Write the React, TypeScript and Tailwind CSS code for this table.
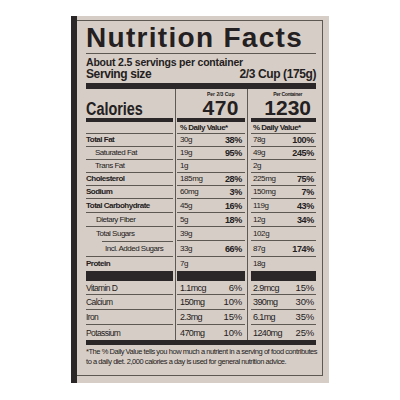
import React from "react";

type Nutrient = {
  name: string;
  nameCls: string;
  h: string;
  a: string;
  ap?: string;
  b: string;
  bp?: string;
  noLine?: boolean;
  subLine?: boolean;
};

const rows: Nutrient[] = [
  { name: "Total Fat", nameCls: "font-bold", h: "h-[13px]", a: "30g", ap: "38%", b: "78g", bp: "100%" },
  { name: "Saturated Fat", nameCls: "pl-[9px]", h: "h-[13px]", a: "19g", ap: "95%", b: "49g", bp: "245%" },
  { name: "Trans Fat", nameCls: "pl-[9px]", h: "h-[13px]", a: "1g", b: "2g" },
  { name: "Cholesterol", nameCls: "font-bold", h: "h-[13px]", a: "185mg", ap: "28%", b: "225mg", bp: "75%" },
  { name: "Sodium", nameCls: "font-bold", h: "h-[13px]", a: "60mg", ap: "3%", b: "150mg", bp: "7%" },
  { name: "Total Carbohydrate", nameCls: "font-bold", h: "h-[14px]", a: "45g", ap: "16%", b: "119g", bp: "43%" },
  { name: "Dietary Fiber", nameCls: "pl-[10px]", h: "h-[14px]", a: "5g", ap: "18%", b: "12g", bp: "34%" },
  { name: "Total Sugars", nameCls: "pl-[10px]", h: "h-[14px]", a: "39g", b: "102g", noLine: true },
  { name: "Incl. Added Sugars", nameCls: "pl-[19px]", h: "h-[16px]", a: "33g", ap: "66%", b: "87g", bp: "174%", subLine: true },
];

const vitamins = [
  { name: "Vitamin D", h: "h-[14px]", a: "1.1mcg", ap: "6%", b: "2.9mcg", bp: "15%" },
  { name: "Calcium", h: "h-[15px]", a: "150mg", ap: "10%", b: "390mg", bp: "30%" },
  { name: "Iron", h: "h-[15px]", a: "2.3mg", ap: "15%", b: "6.1mg", bp: "35%" },
  { name: "Potassium", h: "h-[15px]", a: "470mg", ap: "10%", b: "1240mg", bp: "25%", last: true },
];

const line = "border-[#5e5853]";

function NutrientRow({ r }: { r: Nutrient }) {
  return (
    <div className={`flex ${r.h}`}>
      <div className="w-[87px] flex flex-col">
        {r.subLine && <div className={`ml-[16px] border-t ${line}`} />}
        <div
          className={`flex-1 flex items-center text-[8px] leading-[10px] tracking-[-0.5px] ${r.nameCls} ${
            r.noLine ? "" : `border-b ${line}`
          }`}
        >
          {r.name}
        </div>
      </div>
      <div className={`ml-[2px] w-[70px] border-l ${line} pl-[1px]`}>
        <div className={`h-full flex items-center justify-between border-b ${line} pl-[3px] pr-[3px]`}>
          <span className="text-[8px] leading-[10px] tracking-[-0.4px]">{r.a}</span>
          <span className="text-[9px] leading-[10px] font-bold tracking-[-0.3px]">{r.ap}</span>
        </div>
      </div>
      <div className={`ml-[2px] flex-1 border-l ${line} pl-[3px]`}>
        <div className={`h-full flex items-center justify-between border-b ${line} pl-[2px] pr-[2px]`}>
          <span className="text-[8px] leading-[10px] tracking-[-0.4px]">{r.b}</span>
          <span className="text-[9px] leading-[10px] font-bold tracking-[-0.3px]">{r.bp}</span>
        </div>
      </div>
    </div>
  );
}

export default function App() {
  return (
    <div className="w-[400px] h-[400px] bg-white pt-[16px] font-['Liberation_Sans',Arial,sans-serif] text-[#242021]">
      <div className="ml-[71px] w-[258px] h-[367px] bg-[#d6cec6] flex">
        <div className="w-[6px] h-full bg-[#2b2728]" />
        <div className={`mt-[4px] w-[246px] h-[356px] border-t border-r border-b ${line} pl-[9px] pr-[6px]`}>
          <div className="mt-[3px] text-[28px] leading-[28px] font-bold tracking-[1.3px]">Nutrition Facts</div>
          <div className="mt-[1px] h-[1px] bg-[#5e5853]" />
          <div className="mt-[2px] text-[10.5px] leading-[12px] font-bold tracking-[-0.2px]">
            About 2.5 servings per container
          </div>
          <div className="flex justify-between text-[12px] leading-[13px] font-bold tracking-[-0.4px]">
            <span>Serving size</span>
            <span>2/3 Cup (175g)</span>
          </div>
          <div className="mt-[2px] h-[6px] bg-[#2b2728]" />

          {/* calories header */}
          <div className="flex h-[33px]">
            <div className="w-[87px] flex items-end border-b-4 border-[#2b2728]">
              <span className="inline-block origin-left scale-x-[0.8] text-[18px] leading-[18px] font-bold">
                Calories
              </span>
            </div>
            <div className={`ml-[2px] w-[70px] border-l ${line} pl-[1px]`}>
              <div className="h-full flex justify-end pr-[6px] border-b-4 border-[#2b2728]">
                <div className="flex flex-col items-center justify-end">
                  <span className="text-[5px] leading-[6px] font-bold">Per 2/3 Cup</span>
                  <span className="text-[21px] leading-[21px] font-bold tracking-[0.5px]">470</span>
                </div>
              </div>
            </div>
            <div className={`ml-[2px] flex-1 border-l ${line} pl-[3px]`}>
              <div className="h-full flex justify-end pr-[5px] border-b-4 border-[#2b2728]">
                <div className="flex flex-col items-center justify-end">
                  <span className="text-[5px] leading-[6px] font-bold tracking-[-0.3px]">Per Container</span>
                  <span className="text-[21px] leading-[21px] font-bold">1230</span>
                </div>
              </div>
            </div>
          </div>

          {/* daily value header */}
          <div className="flex h-[12px]">
            <div className={`w-[87px] border-b ${line}`} />
            <div className={`ml-[2px] w-[70px] border-l ${line} pl-[1px]`}>
              <div className={`h-full flex items-center border-b ${line} pl-[3px] text-[8px] leading-[10px] font-bold tracking-[-0.5px]`}>
                % Daily Value*
              </div>
            </div>
            <div className={`ml-[2px] flex-1 border-l ${line} pl-[3px]`}>
              <div className={`h-full flex items-center border-b ${line} pl-[2px] text-[8px] leading-[10px] font-bold tracking-[-0.5px]`}>
                % Daily Value*
              </div>
            </div>
          </div>

          {rows.map((r) => (
            <NutrientRow key={r.name} r={r} />
          ))}

          {/* protein + thick bar */}
          <div className="flex h-[24px]">
            <div className="w-[87px] flex items-center border-b-[10px] border-[#2b2728] text-[8px] leading-[10px] font-bold tracking-[-0.5px]">
              Protein
            </div>
            <div className={`ml-[2px] w-[70px] border-l ${line} pl-[1px]`}>
              <div className="h-full flex items-center border-b-[10px] border-[#2b2728] pl-[3px] text-[8px] leading-[10px] tracking-[-0.4px]">
                7g
              </div>
            </div>
            <div className={`ml-[2px] flex-1 border-l ${line} pl-[3px]`}>
              <div className="h-full flex items-center border-b-[10px] border-[#2b2728] pl-[2px] text-[8px] leading-[10px] tracking-[-0.4px]">
                18g
              </div>
            </div>
          </div>

          {vitamins.map((v) => (
            <div key={v.name} className={`flex ${v.h}`}>
              <div
                className={`w-[87px] flex items-center text-[8.5px] leading-[10px] tracking-[-0.6px] ${
                  v.last ? "" : `border-b ${line}`
                }`}
              >
                {v.name}
              </div>
              <div className={`ml-[2px] w-[70px] border-l ${line} pl-[1px]`}>
                <div
                  className={`h-full flex items-center justify-between pl-[3px] pr-[3px] text-[9px] leading-[10px] ${
                    v.last ? "" : `border-b ${line}`
                  }`}
                >
                  <span className="tracking-[-0.6px]">{v.a}</span>
                  <span className="text-[9.5px] tracking-[-0.2px]">{v.ap}</span>
                </div>
              </div>
              <div className={`ml-[2px] flex-1 border-l ${line} pl-[3px]`}>
                <div
                  className={`h-full flex items-center justify-between pl-[2px] pr-[2px] text-[9px] leading-[10px] ${
                    v.last ? "" : `border-b ${line}`
                  }`}
                >
                  <span className="tracking-[-0.6px]">{v.b}</span>
                  <span className="text-[9.5px] tracking-[-0.2px]">{v.bp}</span>
                </div>
              </div>
            </div>
          ))}

          <div className="h-[5px] bg-[#2b2728]" />
          <div className="pt-[2px] text-[7.5px] leading-[10px] tracking-[-0.45px] whitespace-nowrap">
            <div>*The % Daily Value tells you how much a nutrient in a serving of food contributes</div>
            <div>to a daily diet. 2,000 calories a day is used for general nutrition advice.</div>
          </div>
        </div>
      </div>
    </div>
  );
}
